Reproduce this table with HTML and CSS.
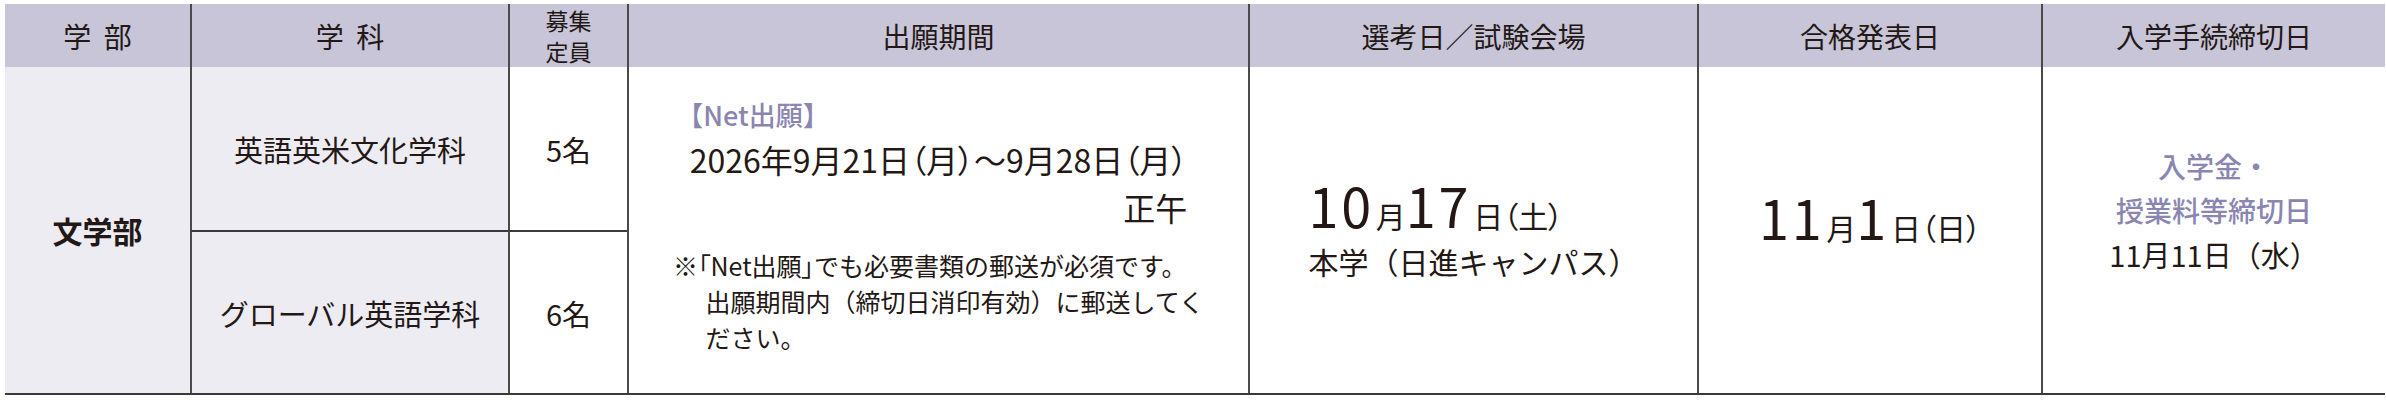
FILE: index.html
```html
<!DOCTYPE html>
<html lang="ja">
<head>
<meta charset="utf-8">
<title>入試日程</title>
<link rel="stylesheet" href="styles.css">
</head>
<body>
<div class="schedule">
  <div class="cell head"><span class="spaced">学部</span></div>
  <div class="cell head bl"><span class="spaced">学科</span></div>
  <div class="cell head bl quota-head"><span class="quota-line">募集</span><span class="quota-line">定員</span></div>
  <div class="cell head bl">出願期間</div>
  <div class="cell head bl">選考日／試験会場</div>
  <div class="cell head bl">合格発表日</div>
  <div class="cell head bl">入学手続締切日</div>

  <div class="cell shade span2 faculty">文学部</div>
  <div class="cell shade bl dept">英語英米文化学科</div>
  <div class="cell bl dept">5名</div>
  <div class="cell bl span2">
    <div class="apply">
      <div class="apply-main">
        <div class="net">【Net出願】</div>
        <div class="period">2026年9月21日<span class="dow">（月）</span>～9月28日<span class="dow">（月）</span></div>
        <div class="noon">正午</div>
      </div>
      <p class="note">※<span class="dow">「Net出願」</span>でも必要書類の郵送が必須です。<br>出願期間内（締切日消印有効）に郵送してく<br>ださい。</p>
    </div>
  </div>
  <div class="cell bl span2">
    <div class="exam">
      <p class="exam-date"><span class="big">10</span>月<span class="big">17</span>日<span class="dow">（土）</span></p>
      <p class="exam-place">本学（日進キャンパス）</p>
    </div>
  </div>
  <div class="cell bl span2">
    <p class="result"><span class="big">11</span>月<span class="big">1</span>日<span class="dow">（日）</span></p>
  </div>
  <div class="cell bl span2">
    <div class="deadline">
      <p class="deadline-label">入学金・<br>授業料等締切日</p>
      <p class="deadline-date">11月11日（水）</p>
    </div>
  </div>

  <div class="cell shade bl bt dept">グローバル英語学科</div>
  <div class="cell bl bt dept">6名</div>
</div>
</body>
</html>
```

FILE: styles.css
```css
html, body {
  margin: 0;
  padding: 0;
  background: #ffffff;
}

body {
  font-family: "Noto Sans CJK JP", "Noto Sans", sans-serif;
  color: #231815;
}

p {
  margin: 0;
}

.schedule {
  display: grid;
  grid-template-columns: 185px 318px 119px 621px 449px 344px 344px;
  grid-template-rows: 63px 163px 163px;
  width: 2380px;
  margin: 4px 0 0 5px;
  border-bottom: 2px solid #3a3a3a;
}

.cell {
  box-sizing: border-box;
  display: flex;
  align-items: center;
  justify-content: center;
  text-align: center;
  min-width: 0;
}

.bl {
  border-left: 2px solid #4a4a4a;
}

.bt {
  border-top: 2px solid #3a3a3a;
}

.span2 {
  grid-row: span 2;
}

.head {
  background: #c8c5d9;
  font-size: 28px;
  line-height: 1;
}

.spaced {
  letter-spacing: 0.45em;
  padding-left: 0.45em;
}

.quota-head {
  flex-direction: column;
  font-size: 23px;
}

.quota-line {
  display: block;
  line-height: 31px;
}

.shade {
  background: #edecf3;
}

.faculty {
  font-size: 30px;
  font-weight: 700;
}

.dept {
  font-size: 29px;
}

.dow {
  font-feature-settings: "palt";
}

/* 出願期間 */
.apply {
  display: flex;
  flex-direction: column;
  align-items: center;
  padding-bottom: 10px;
}

.apply-main {
  display: flex;
  flex-direction: column;
  align-items: flex-start;
}

.net {
  font-size: 27px;
  line-height: 40px;
  font-weight: 500;
  color: #8b85b1;
  margin-left: -0.5em;
}

.period {
  font-size: 32px;
  line-height: 48px;
}

.noon {
  align-self: flex-end;
  font-size: 32px;
  line-height: 48px;
}

.note {
  margin-top: 16px;
  font-size: 25px;
  line-height: 36px;
  text-align: left;
  padding-left: 1.3em;
  text-indent: -1.3em;
}

/* 選考日 */
.exam {
  text-align: left;
}

.exam-date {
  font-size: 30px;
  line-height: 52px;
}

.big {
  font-size: 54px;
  letter-spacing: 0.05em;
  margin-right: 2px;
}

.exam-place {
  font-size: 30px;
  line-height: 40px;
}

.result {
  font-size: 30px;
  line-height: 60px;
  padding-bottom: 16px;
}

/* 入学手続 */
.deadline {
  padding-bottom: 40px;
}

.deadline-label {
  font-size: 28px;
  line-height: 44px;
  font-weight: 500;
  color: #8b85b1;
}

.deadline-date {
  font-size: 29px;
  line-height: 44px;
}
```
